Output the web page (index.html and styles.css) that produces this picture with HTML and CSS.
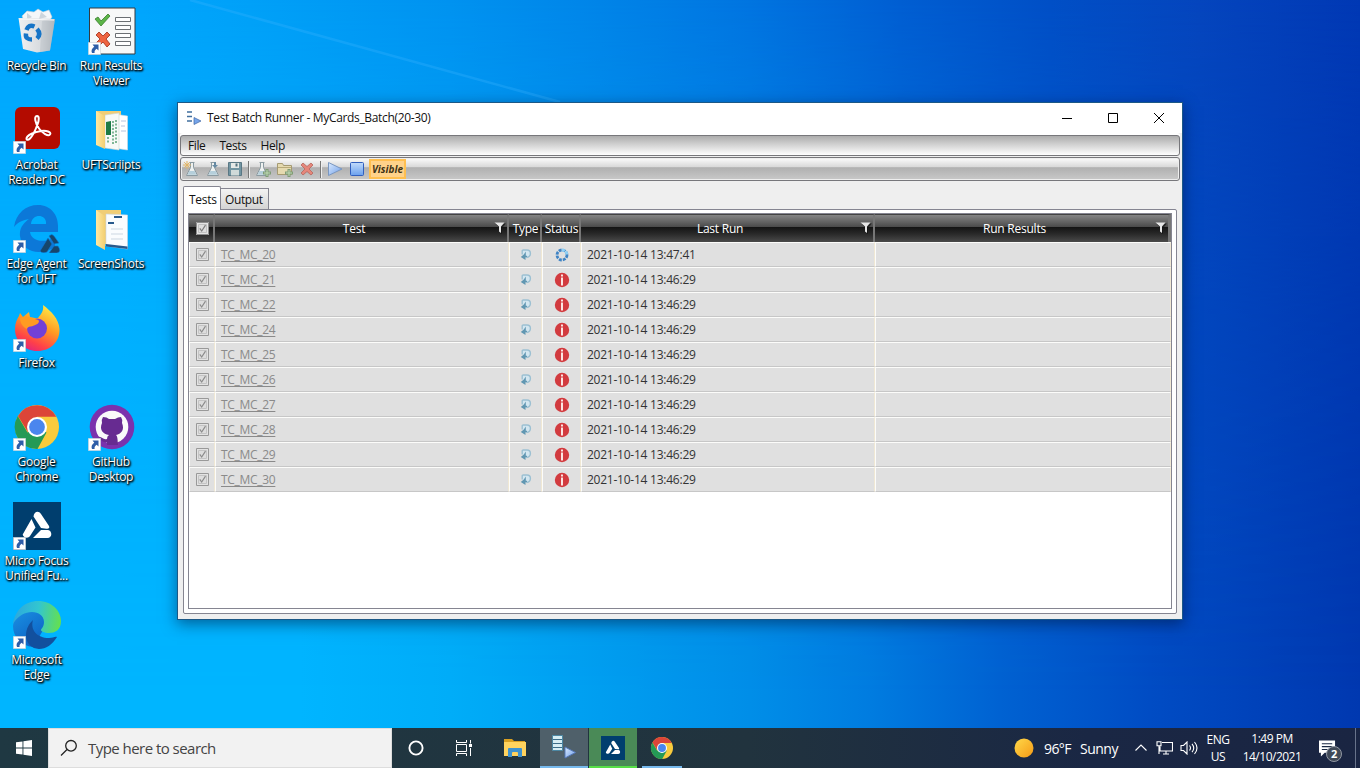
FILE: index.html
```
<!DOCTYPE html>
<html lang="en">
<head>
<meta charset="utf-8">
<title>Test Batch Runner</title>
<link rel="stylesheet" href="styles.css">
</head>
<body>
<svg class="defs" aria-hidden="true">
  <defs>
    <linearGradient id="gBlue" x1="0" y1="0" x2="1" y2="1"><stop offset="0" stop-color="#dcebff"/><stop offset="1" stop-color="#6d9de8"/></linearGradient>
    <linearGradient id="gStop" x1="0" y1="0" x2="0" y2="1"><stop offset="0" stop-color="#c3dcfb"/><stop offset="1" stop-color="#6aa0ee"/></linearGradient>
    <linearGradient id="gFox" x1="0.8" y1="0" x2="0.3" y2="1"><stop offset="0" stop-color="#fff14a"/><stop offset="0.45" stop-color="#ff9a22"/><stop offset="0.8" stop-color="#ff4148"/><stop offset="1" stop-color="#e3257c"/></linearGradient>
    <linearGradient id="gEdgeTop" x1="0" y1="0.5" x2="1" y2="0.6"><stop offset="0" stop-color="#2da8de"/><stop offset="0.5" stop-color="#32c6d0"/><stop offset="1" stop-color="#66e04d"/></linearGradient>
    <linearGradient id="gEdgeMid" x1="0" y1="0" x2="0.6" y2="1"><stop offset="0" stop-color="#1a91e3"/><stop offset="1" stop-color="#0d62c4"/></linearGradient>
    <linearGradient id="gBin" x1="0" y1="0" x2="1" y2="0"><stop offset="0" stop-color="#f0f1f2"/><stop offset="0.65" stop-color="#d5d9dd"/><stop offset="1" stop-color="#a9afb5"/></linearGradient>
    <linearGradient id="gSun" x1="0" y1="0" x2="1" y2="1"><stop offset="0" stop-color="#ffd94a"/><stop offset="1" stop-color="#f59a16"/></linearGradient>
    <linearGradient id="gFolder" x1="0" y1="0" x2="1" y2="0"><stop offset="0" stop-color="#ffe9a2"/><stop offset="1" stop-color="#f3cf72"/></linearGradient>
    <symbol id="shortcut" viewBox="0 0 13 13"><path fill="#fff" stroke="#b9c4cf" stroke-width=".6" d="M.3.3h12.4v12.4H.3z"/><path fill="#2d5da8" d="M4.5 2.5h6v6L8.600 6.800C6.800 8 6.300 9.300 6.600 11H4C2.800 8.500 4 6.200 6.300 4.700z"/></symbol>
    <symbol id="chrome" viewBox="0 0 48 48"><circle cx="24" cy="24" r="22" fill="#f9cb3d"/><path fill="#dc4538" d="M5 13A22 22 0 0 1 43.300 13.800H24L14.800 29z"/><path fill="#249a56" d="M4.800 13A22 22 0 0 0 24.500 46L33.500 29.500 24 24 14.500 29.500z"/><circle cx="24" cy="24" r="10" fill="#fff"/><circle cx="24" cy="24" r="7.900" fill="#4a86ee"/></symbol>
    <symbol id="tri" viewBox="0 0 48 48"><path fill="#fff" d="M20.500 14.500c.5-5 5-6.500 7.500-2.500l8 12c1 2-.5 3-2.500 2.700L28 26zM18.500 17 22.500 25.500l-5.500 8.500c-2 3-7 1.500-7.300-1.500zM28 28h7c4.500.8 4.500 8-.5 8H20z"/></symbol>
    <symbol id="filter" viewBox="0 0 12 12"><path fill="#111" opacity=".7" d="M1 1.500h11L8 6v6L6 11V6z"/><path fill="#e6e6e6" d="M.5.500h10L7 4.500V11L5 9.500v-5z"/></symbol>
    <symbol id="check" viewBox="0 0 13 13"><path class="ck-box" d="M.5.500h12v12H.5z"/><path class="ck-in" d="M2.500 2.500h8v8h-8z"/><path class="ck-tick" d="M3.800 6.300 5.700 9l3.800-5.800"/></symbol>
    <symbol id="type" viewBox="0 0 12 12"><path fill="#d3e6f0" stroke="#9cc0d2" stroke-width="1.400" d="M2.200 5.500V2q0-1 1-1H7q3.400 0 3.400 3.500T6.500 8.500"/><path fill="#6197b2" d="M5.800 2.500v4.300H7v1.400H5.500V11L.8 8l3-2.500z"/></symbol>
    <symbol id="info" viewBox="0 0 16 16"><circle cx="8" cy="8" r="7.200" fill="#d23b3f"/><path fill="#fbe6e4" d="M7 2.500h2v2H7zM7 5.500h2v8H7z"/></symbol>
    <symbol id="flask" viewBox="0 0 16 16"><path fill="#eef1f0" stroke="#8a9aa1" stroke-width="1" d="M6.500 1.500h5M7.500 1.500v5L3.500 14.500h11L10.500 6.500v-5"/><path fill="#b5cfdb" d="M6.300 10h5.300l1.800 3.700H4.600z"/></symbol>
  </defs>
</svg>
<div class="screen">
  <svg class="wallpaper" viewBox="0 0 1360 728"><path d="M190 0 560 102" stroke="#3db4ff" stroke-width="2.500" opacity=".3"/></svg>
  <main class="desktop">
    <div class="shortcut r1 c1"><svg class="glyph" viewBox="0 0 48 48"><path fill="#f4f7f9" stroke="#c5cdd4" stroke-width=".6" d="M9 9 14 4l7 1 4-3 5 3 6-2 3 7-4 6H12z"/><path fill="#cdd5dc" d="M14 6l5 4-5 3zM28 5l6 5-8 2z"/><path fill="url(#gBin)" d="M5.500 11 42 12 37 43.500 24 45.500 10 42z"/><path fill="#b9bfc5" opacity=".5" d="M29 14 42 12 37 43.500 27 45z"/><path d="m7 12 34 1" stroke="#fafafa"/><g fill="none" stroke="#1674c7" stroke-width="4.500"><path d="M13.500 23q2-6 8-3.500"/><path d="M24 22q4.500 5 0 9.500"/><path d="M19 32.500q-7 0-6-6"/></g></svg><span class="name">Recycle Bin</span></div>
    <div class="shortcut r1 c2"><svg class="glyph" viewBox="0 0 48 48"><path fill="#f7f8f8" stroke="#343a40" d="M1.500 1h45.500v46H1.500z"/><path fill="#5cb548" stroke="#397d2c" stroke-width=".8" d="m7 12 3-2 3 4 7-7 2 2-9 10z"/><path fill="#ee6440" stroke="#9e2b16" stroke-width=".8" d="m8 28 3-3 4 4 4-4 3 3-4 4 4 5-3 3-4-5-4 4-3-3 4-4z"/><path fill="#fff" stroke="#6b6f73" d="M27.500 10.500h15v4h-15zM27.500 18.500h15v4h-15zM27.500 26.500h15v4h-15zM27.500 34.500h15v4h-15z"/></svg><svg class="arrow"><use href="#shortcut"/></svg><span class="name">Run Results<br>Viewer</span></div>
    <div class="shortcut r2 c1"><svg class="glyph" viewBox="0 0 48 48"><rect x="2" y="1" width="45" height="42" rx="6" fill="#b30b00"/><path fill="none" stroke="#fff" stroke-width="2" stroke-linejoin="round" d="M24 10c-3.500 0-1.500 8 2 12.500S35 31 37 28.500s-4-4.500-9-3.500-11 2.500-13.500 5.500 0 4.500 2.500 2 6-10 7.500-14S26.500 10 24 10z"/></svg><svg class="arrow"><use href="#shortcut"/></svg><span class="name">Acrobat<br>Reader DC</span></div>
    <div class="shortcut r2 c2"><svg class="glyph" viewBox="0 0 48 48"><path fill="#f0cd76" d="M8 5h25v34H8z"/><path fill="#fff" stroke="#d5dade" stroke-width=".6" d="M26 8 39.500 10v34L26 42z"/><path stroke="#b6c4df" d="M33 15h5M33 20h4M33 25h5"/><path fill="#f7f9f7" stroke="#ccd4cc" stroke-width=".6" d="M17 9 31 7v37L17 42z"/><path fill="#1d7a45" d="M18 16l5-1v14h-5z"/><path stroke="#5aa178" stroke-width="1.500" stroke-dasharray="2 1.500" d="M25 15v23M28 14v24M20 31v7"/><path fill="url(#gFolder)" d="m8 5 9 5v33l-9-4z"/></svg><span class="name">UFTScriipts</span></div>
    <div class="shortcut r3 c1"><svg class="glyph" viewBox="0 0 48 48"><path fill="#0c78d8" d="M1 22C3 8 13 0 25 0c13 0 20 10 20 21v6H17c1 9 14 12 25 5v10c-14 9-33 6-35-11-1-9 5-14 9-17 C10 15 5 17 1 22zm17-3h15c1-10-14-11-15 0z"/><path fill="#17466c" stroke="#0c78d8" stroke-width=".6" d="M36 31q3-3 5 0l5 7-5 1zM35 33l4 6-5 8q-5 2-7-1zM41 41h4q4 6-1 7h-8z"/></svg><svg class="arrow"><use href="#shortcut"/></svg><span class="name">Edge Agent<br>for UFT</span></div>
    <div class="shortcut r3 c2"><svg class="glyph" viewBox="0 0 48 48"><path fill="#f0cd76" d="M8 5h25v34H8z"/><path fill="#fafcfe" stroke="#cbd5df" stroke-width=".6" d="M18 9 39.500 10v34L18 41z"/><path fill="#28598c" d="m18 39 21.500 2.500V44L18 41.500zM26 11h8v2h-8zM20 17h6v2h-6z"/><path stroke="#ccd7e2" d="M23 24h12M23 29h12M23 34h12"/><path fill="url(#gFolder)" d="m8 5 9 6v34l-9-5z"/></svg><span class="name">ScreenShots</span></div>
    <div class="shortcut r4 c1"><svg class="glyph" viewBox="0 0 48 48"><path fill="url(#gFox)" d="M30 1c8 6 16 14 16.500 24C47 38 37 47 24.500 47 11 47 2 37 2 25c0-6 2-10 4-13l1-3 3 4 6-5 1 5c4 1 6 1 8 1 3-4 6-7 5-13z"/><circle cx="24" cy="24.500" r="10" fill="#7240d6"/><path fill="#ff9b22" d="M7 14q6-3 11 0c3 1 7 1 8 3 0 3-4 4-6 5-3 1-5 0-6 3-4-2-7-6-7-11z"/></svg><svg class="arrow"><use href="#shortcut"/></svg><span class="name">Firefox</span></div>
    <div class="shortcut r5 c1"><svg class="glyph"><use href="#chrome"/></svg><svg class="arrow"><use href="#shortcut"/></svg><span class="name">Google<br>Chrome</span></div>
    <div class="shortcut r5 c2"><svg class="glyph" viewBox="0 0 48 48"><circle cx="24" cy="24" r="22.300" fill="#7b32ad"/><circle cx="24" cy="24" r="16.300" fill="#fafafa"/><path fill="#672b91" d="M15 14q4 0 6 2h6q3-2 6-2 2 3 1 6c3 7-1 11-6 12 2 2 1.500 6 2 10h-11v-3c-6 1-6-4-9-5 4-1 5 3.500 9 2q0-3 2-4c-6-1-10-5-7-12q-1-3 1-6z"/></svg><svg class="arrow"><use href="#shortcut"/></svg><span class="name">GitHub<br>Desktop</span></div>
    <div class="shortcut r6 c1"><svg class="glyph mf"><use href="#tri"/></svg><svg class="arrow"><use href="#shortcut"/></svg><span class="name">Micro Focus<br>Unified Fu...</span></div>
    <div class="shortcut r7 c1"><svg class="glyph" viewBox="0 0 48 48"><path fill="url(#gEdgeMid)" d="M0 25C1 14 10 8 20 10c10 2 13 9 12 16L20 46C8 45 0 36 0 25z"/><path fill="url(#gEdgeTop)" d="M0 23C2 9 12 0 25 0c14 0 23 10 23 20 0 9-6 12-12 12-5 0-8-2-8-3s3-3 3-8C31 9 10 6 0 23z"/><path fill="#12509e" d="M20 19c-3 10 4 18 16 18 4 0 6-2 8-1-5 8-11 12-18 12C11 47 9 29 20 19z"/></svg><svg class="arrow"><use href="#shortcut"/></svg><span class="name">Microsoft<br>Edge</span></div>
  </main>

  <section class="window">
    <header class="titlebar">
      <svg class="appicon" viewBox="0 0 16 16"><path stroke="#406f9f" stroke-width="1.500" d="M1 2h5M1 6.500h5M1 11h5"/><path fill="#76a5ea" stroke="#3e65a5" stroke-width=".7" d="M8 7.500 15 11l-7 3.500z"/></svg>
      <h1>Test Batch Runner - MyCards_Batch(20-30)</h1>
      <div class="controls">
        <svg viewBox="0 0 12 12"><path d="M1 6.500h10"/></svg>
        <svg viewBox="0 0 12 12"><path d="M1.500 1.500h9v9h-9z"/></svg>
        <svg viewBox="0 0 12 12"><path d="m1 1 10 10M11 1 1 11"/></svg>
      </div>
    </header>
    <nav class="menubar"><span>File</span><span>Tests</span><span>Help</span></nav>
    <div class="toolbar">
      <svg viewBox="0 0 16 16"><use href="#flask"/><path stroke="#e2b566" stroke-width="1" d="M4 0v8M0 4h8M1.200 1.200l5.600 5.600M6.800 1.200 1.200 6.800"/></svg>
      <svg viewBox="0 0 16 16"><use href="#flask" x="-1"/><path fill="#668aa3" d="M9 1h2v3h2l-3 3-3-3h2z"/></svg>
      <svg viewBox="0 0 16 16"><path fill="#7295a2" stroke="#597784" d="M1.500 1.500h13v13h-13z"/><path fill="#e6e9e7" d="M4 2h8v5H4z"/><path fill="#d0dad9" d="M4 9h8v5.500H4z"/><path fill="#55727f" d="M8.500 2.500h2v3h-2z"/></svg>
      <i class="sep"></i>
      <svg viewBox="0 0 16 16"><use href="#flask" x="-2"/><path stroke="#7f9c76" stroke-width="3" d="M12 8v8M8 12h8"/><path stroke="#c0dab5" stroke-width="1" d="M12 9v6M9 12h6"/></svg>
      <svg viewBox="0 0 16 16"><path fill="#e5dab0" stroke="#a59a72" d="M.5 2.500h5l1 2h8v9H.5z"/><path stroke="#b8aa79" d="M1 6.500h13"/><path stroke="#7f9c76" stroke-width="3" d="M12 8v8M8 12h8"/><path stroke="#c0dab5" d="M12 9v6M9 12h6"/></svg>
      <svg viewBox="0 0 16 16"><path fill="#e5867a" stroke="#b5665d" stroke-width=".8" d="m2 4 2-2 4 3.500L12 2l2 2-4 4 4 4-2 2-4-3.500L4 14l-2-2 4-4z"/></svg>
      <i class="sep"></i>
      <svg viewBox="0 0 16 16"><path fill="url(#gBlue)" stroke="#7a97c0" d="m1.500 1.500 13.500 6.500-13.500 6.500z"/></svg>
      <svg viewBox="0 0 16 16"><rect x="1.500" y="1.500" width="13" height="13" rx="1" fill="url(#gStop)" stroke="#315fbe"/></svg>
      <b class="visible">Visible</b>
    </div>
    <div class="tabs"><span class="tab active">Tests</span><span class="tab">Output</span></div>
    <div class="panel"><div class="gridbox">
      <div class="row head"><span class="cell ck"><svg><use href="#check"/></svg></span><span class="cell title">Test<svg><use href="#filter"/></svg></span><span class="cell">Type</span><span class="cell">Status</span><span class="cell title">Last Run<svg><use href="#filter"/></svg></span><span class="cell title">Run Results<svg><use href="#filter"/></svg></span></div>
      <div class="row"><span class="cell ck"><svg><use href="#check"/></svg></span><span class="cell link"><a>TC_MC_20</a></span><span class="cell ty"><svg><use href="#type"/></svg></span><span class="cell st"><svg viewBox="0 0 16 16"><circle cx="8" cy="8" r="5" fill="none" stroke="#3e83c4" stroke-width="2.800" stroke-dasharray="2.900 1.027"/><path fill="none" stroke="#8ed0f5" stroke-width="2.800" stroke-dasharray="2.900 1.027" d="M8 3a5 5 0 0 1 5 5"/></svg></span><span class="cell">2021-10-14 13:47:41</span><span class="cell"></span></div>
      <div class="row"><span class="cell ck"><svg><use href="#check"/></svg></span><span class="cell link"><a>TC_MC_21</a></span><span class="cell ty"><svg><use href="#type"/></svg></span><span class="cell st"><svg><use href="#info"/></svg></span><span class="cell">2021-10-14 13:46:29</span><span class="cell"></span></div>
      <div class="row"><span class="cell ck"><svg><use href="#check"/></svg></span><span class="cell link"><a>TC_MC_22</a></span><span class="cell ty"><svg><use href="#type"/></svg></span><span class="cell st"><svg><use href="#info"/></svg></span><span class="cell">2021-10-14 13:46:29</span><span class="cell"></span></div>
      <div class="row"><span class="cell ck"><svg><use href="#check"/></svg></span><span class="cell link"><a>TC_MC_24</a></span><span class="cell ty"><svg><use href="#type"/></svg></span><span class="cell st"><svg><use href="#info"/></svg></span><span class="cell">2021-10-14 13:46:29</span><span class="cell"></span></div>
      <div class="row"><span class="cell ck"><svg><use href="#check"/></svg></span><span class="cell link"><a>TC_MC_25</a></span><span class="cell ty"><svg><use href="#type"/></svg></span><span class="cell st"><svg><use href="#info"/></svg></span><span class="cell">2021-10-14 13:46:29</span><span class="cell"></span></div>
      <div class="row"><span class="cell ck"><svg><use href="#check"/></svg></span><span class="cell link"><a>TC_MC_26</a></span><span class="cell ty"><svg><use href="#type"/></svg></span><span class="cell st"><svg><use href="#info"/></svg></span><span class="cell">2021-10-14 13:46:29</span><span class="cell"></span></div>
      <div class="row"><span class="cell ck"><svg><use href="#check"/></svg></span><span class="cell link"><a>TC_MC_27</a></span><span class="cell ty"><svg><use href="#type"/></svg></span><span class="cell st"><svg><use href="#info"/></svg></span><span class="cell">2021-10-14 13:46:29</span><span class="cell"></span></div>
      <div class="row"><span class="cell ck"><svg><use href="#check"/></svg></span><span class="cell link"><a>TC_MC_28</a></span><span class="cell ty"><svg><use href="#type"/></svg></span><span class="cell st"><svg><use href="#info"/></svg></span><span class="cell">2021-10-14 13:46:29</span><span class="cell"></span></div>
      <div class="row"><span class="cell ck"><svg><use href="#check"/></svg></span><span class="cell link"><a>TC_MC_29</a></span><span class="cell ty"><svg><use href="#type"/></svg></span><span class="cell st"><svg><use href="#info"/></svg></span><span class="cell">2021-10-14 13:46:29</span><span class="cell"></span></div>
      <div class="row"><span class="cell ck"><svg><use href="#check"/></svg></span><span class="cell link"><a>TC_MC_30</a></span><span class="cell ty"><svg><use href="#type"/></svg></span><span class="cell st"><svg><use href="#info"/></svg></span><span class="cell">2021-10-14 13:46:29</span><span class="cell"></span></div>
    </div></div>
  </section>

  <footer class="taskbar">
    <div class="start"><svg viewBox="0 0 16 16"><path fill="#fff" d="M0 2.300 6.500 1.400V7.500H0zM7.400 1.200 16 0v7.500H7.400zM0 8.400h6.500v6.200L0 13.700zM7.400 8.400H16V16l-8.600-1.200z"/></svg></div>
    <div class="search"><svg viewBox="0 0 18 18"><path fill="none" stroke="#222" stroke-width="1.300" d="M1 16.500 7 10.500"/><circle cx="11" cy="6.800" r="5.300" fill="none" stroke="#222" stroke-width="1.300"/></svg><span>Type here to search</span></div>
    <div class="task"><svg class="i16" viewBox="0 0 16 16"><circle cx="8" cy="8" r="6.600" fill="none" stroke="#fff" stroke-width="1.900"/></svg></div>
    <div class="task"><svg class="i16" viewBox="0 0 16 16"><path fill="none" stroke="#fff" stroke-width="1" d="M.5 0v2.500h10V0M.5 4.500h10v7H.5zM.5 16v-2.500h10V16M14.500 0v3.500M14.500 8v8"/><path fill="#fff" d="M13 4h3v3h-3z"/></svg></div>
    <div class="task ex"><svg class="i22" viewBox="0 0 22 20"><path fill="#d9a022" d="M0 1h8l2 2h11v4H0z"/><path fill="#ffd35e" d="M0 4h22v14H0z"/><path fill="#3e92cf" d="M4 19v-8q0-1 1-1h12q1 0 1 1v8h-4v-4q0-1-1-1H9q-1 0-1 1v4z"/></svg></div>
    <div class="task batch"><svg class="i24" viewBox="0 0 24 24"><path fill="#d6edf4" stroke="#4c87a3" d="M.5.500h10v15H.5z"/><path stroke="#3c6c88" d="M1 4.500h9M1 8.500h9M1 12.500h9"/><path fill="url(#gBlue)" stroke="#5478b9" d="m13 12 10.500 5.500L13 23z"/></svg></div>
    <div class="task uft"><svg class="mf"><use href="#tri"/></svg></div>
    <div class="task chr"><svg class="i24"><use href="#chrome"/></svg></div>
    <div class="tray">
      <svg class="sun" viewBox="0 0 20 20"><circle cx="10" cy="10" r="9.500" fill="url(#gSun)"/></svg>
      <span class="temp">96°F</span><span class="wx">Sunny</span>
      <svg class="chev" viewBox="0 0 12 8"><path d="m.5 6.500 5.500-5.500 5.500 5.500"/></svg>
      <svg class="net" viewBox="0 0 17 14"><path d="M6 1.500h10.500v8.500H4V5.500M1 .8h4v4H1zM3 5v8M7 13h6M10 10v3"/></svg>
      <svg class="vol" viewBox="0 0 18 14"><path d="M1 4.500h2.500L7 1v12L3.500 9.500H1zM9.500 4.500q2 2.500 0 5M12 2.800q3.500 4.200 0 8.400M14.500 1q5 6 0 12"/></svg>
      <span class="lang">ENG<br>US</span><span class="clock">1:49 PM<br>14/10/2021</span>
      <div class="note"><svg viewBox="0 0 18 17"><path fill="#fff" d="M0 0h17v13H6l-4 4v-4H0z"/><path stroke="#1b2943" stroke-width="1.200" d="M3 3.500h11M3 6.500h11M3 9.500h6"/></svg><b>2</b></div>
      <i class="peek"></i>
    </div>
  </footer>
</div>
</body>
</html>
```
FILE: styles.css
```
* { box-sizing: border-box; }
body { margin: 0; font: 12px/15px "Open Sans", "Noto Sans", sans-serif; letter-spacing: -.24px; color: #111; }
svg { display: block; flex: none; }
.defs { position: absolute; width: 0; height: 0; }
.screen { position: relative; width: 1360px; height: 768px; overflow: hidden; display: flex; flex-direction: column;
  background: linear-gradient(90deg, #00b5ff 300px, #00adf8 450px, #009ef0 600px, #008ee8 750px, #007ce0 870px, #0062d2 1000px, #004cc4 1150px, #0038b0 1360px); }
.screen::before { content: ""; position: absolute; inset: 0;
  background: linear-gradient(90deg, #00a6fe 120px, #00a0f8 250px, #0092f0 450px, #0084e8 600px, #0074e0 750px, #005ed2 900px, #004fc6 1050px, #0445bd 1200px, #0038b4 1360px);
  mask-image: linear-gradient(#000, rgba(0,0,0,.35) 40%, transparent 90%); }
.wallpaper { position: absolute; left: 0; top: 0; width: 1360px; height: 728px; }

.desktop { flex: 1; display: grid; grid-template-columns: 74px 75px; grid-template-rows: repeat(7, 99px); }
.shortcut { position: relative; display: flex; flex-direction: column; align-items: center; padding-top: 7px; color: #fff; text-align: center; }
.glyph { width: 48px; height: 48px; }
.arrow { position: absolute; left: 13px; top: 42px; width: 13px; height: 13px; }
.c2 .arrow { left: 14px; }
.name { margin-top: 3px; padding-right: 1px; white-space: nowrap; letter-spacing: -.28px; text-shadow: 1px 1px 2px #000, 1px 1px 2px #000, 0 1px 2px rgba(0,0,0,.8); }
.mf { background: #003e6e; }
.r1 { grid-row: 1; } .r2 { grid-row: 2; } .r3 { grid-row: 3; } .r4 { grid-row: 4; } .r5 { grid-row: 5; } .r6 { grid-row: 6; } .r7 { grid-row: 7; }
.c1 { grid-column: 1; } .c2 { grid-column: 2; }

.window { position: absolute; left: 177px; top: 102px; width: 1006px; height: 518px; display: flex; flex-direction: column; background: #efefef; border: 1px solid #1c5886; box-shadow: 0 4px 14px rgba(0,15,50,.5); }
.titlebar { height: 30px; display: flex; align-items: center; background: #fff; padding-left: 8px; flex: none; }
.appicon { width: 16px; height: 16px; }
h1 { flex: 1; margin: 0 0 2px 5px; font-size: 12px; font-weight: 400; letter-spacing: -.34px; }
.controls { display: flex; gap: 34px; padding-right: 17px; margin-bottom: 1px; }
.controls svg { width: 12px; height: 12px; fill: none; stroke: #000; }
.menubar { height: 21px; margin: 2px 2px 0; padding-left: 7px; display: flex; gap: 14px; align-items: center; border: 1px solid #77777b; border-radius: 3px; background: linear-gradient(#acacac, #fff); box-shadow: 0 -2px #fff; letter-spacing: -.4px; flex: none; }
.toolbar { height: 24px; margin: 1px 2px 0; display: flex; align-items: center; padding-left: 2px; gap: 6px; border: 1px solid #77777b; border-radius: 3px; background: linear-gradient(#fcfcfc, #d9d9d9 40%, #b0b0b0 44%, #c9c9c9); box-shadow: inset 0 0 0 1px #eee; flex: none; }
.toolbar svg { width: 16px; height: 16px; }
.sep { width: 2px; height: 17px; margin: 0 -1px; border-left: 1px solid #777; border-right: 1px solid #eee; }
.visible { width: 37px; height: 20px; margin-left: -2px; border: 2px solid #ffbf50; background: #ffd28a; color: #3f3216; font: italic bold 10px/16px "Open Sans", sans-serif; letter-spacing: 0; text-align: center; }
.tabs { display: flex; height: 28px; padding: 5px 5px 0; align-items: flex-end; position: relative; letter-spacing: -.4px; flex: none; }
.tab { height: 21px; padding: 3px 4px; border: 1px solid #858591; border-bottom: 0; background: linear-gradient(#f3f3f3, #d4d4d4); width: 49px; margin-left: -1px; line-height: 16px; white-space: nowrap; }
.tab.active { width: 38px; height: 24px; margin: 0 0 -1px; padding: 5px 5px; background: #fff; border-radius: 2px 2px 0 0; letter-spacing: -.3px; }
.panel { flex: 1; margin: 0 5px 5px; border: 1px solid #858591; background: #fff; padding: 3px 4px 4px; border-radius: 0 2px 2px; min-height: 0; }
.gridbox { height: 100%; border: 1px solid #858591; overflow: hidden; }
.row { display: grid; grid-template-columns: 26px 294px 33px 39px 294px 296px; height: 25px; }
.cell { display: flex; align-items: center; padding-left: 5px; background: #e0e0e0; border: 1px solid #fcfcfa; border-right-color: #f0e8d4; border-bottom-color: #c7c7c7; color: #333; white-space: nowrap; }
.link { color: #8a8a8a; }
.link a { text-decoration: underline; text-underline-offset: 2px; letter-spacing: -.3px; }
.ck { padding: 0; justify-content: center; }
.ck svg { width: 13px; height: 13px; fill: none; opacity: .85; }
.ck-box { fill: #e4e4e4; stroke: #8d8d8d; } .ck-in { fill: #ddd; stroke: #c0c0c0; } .ck-tick { fill: none; stroke: #7d7d7d; stroke-width: 1.2; }
.ty, .st { padding: 0; justify-content: center; }
.ty svg { width: 12px; height: 12px; }
.st svg { width: 16px; height: 16px; }
.head { height: 28px; }
.head .cell { position: relative; padding: 0 0 1px 2px; justify-content: center; border: 0; border-right: 2px solid #777; border-top: 1px solid #444; background: linear-gradient(#858585, #4c4c4c 43%, #151515 46%, #292929 70%, #4a4a4a); color: #fff; }
.head .cell:last-child { border-right-width: 3px; }
.head .title { padding-right: 16px; }
.head .title svg { position: absolute; right: 1px; top: 7px; width: 12px; height: 12px; }
.head .ck svg { background: #eee; opacity: 1; }

.taskbar { height: 40px; display: flex; background: linear-gradient(90deg, #1f3842, #21333e 55%, #1a2744 80%, #1a2542); position: relative; }
.start { width: 48px; display: grid; place-items: center; }
.start svg { width: 16px; height: 16px; }
.search { width: 344px; background: #f2f2f2; border: 1px solid #ddd; display: flex; align-items: center; padding-left: 11px; gap: 10px; font-size: 15px; letter-spacing: -.54px; color: #444; }
.search svg { width: 18px; height: 18px; }
.task { width: 48px; display: grid; place-items: center; }
.ex { width: 52px; padding-left: 2px; }
.batch { background: #4f606a; border-bottom: 2px solid #76b9ed; }
.uft { background: #4a8a57; border-bottom: 2px solid #56df47; margin-left: 1px; }
.uft svg { margin-top: 2px; }
.chr { width: 40px; margin-left: 5px; padding-top: 1px; border-bottom: 2px solid #76b9ed; }
.i16 { width: 16px; height: 16px; } .i22 { width: 22px; height: 20px; } .i24, .uft svg { width: 24px; height: 24px; }
.tray { margin-left: auto; width: 346px; display: flex; align-items: center; color: #fff; }
.tray svg { fill: none; stroke: #fff; stroke-width: 1.1; }
.tray .sun { width: 20px; height: 20px; stroke: none; }
.temp { width: 36px; margin-left: 10px; font-size: 14px; letter-spacing: -.6px; }
.wx { width: 46px; font-size: 14px; letter-spacing: -.5px; }
.chev { width: 12px; height: 8px; margin-left: 9px; }
.net { width: 17px; height: 14px; margin-left: 9px; }
.vol { width: 18px; height: 14px; margin-left: 7px; }
.lang, .clock { line-height: 17px; text-align: center; }
.lang { width: 30px; margin-left: 5px; letter-spacing: -.5px; }
.clock { width: 62px; margin: -1px 0 0 8px; line-height: 18px; letter-spacing: -.5px; }
.note { position: relative; margin-left: 16px; width: 26px; height: 24px; padding-top: 4px; }
.note svg { width: 17px; height: 17px; stroke: none; }
.note b { position: absolute; left: 7px; top: 10px; width: 16px; height: 16px; border: 1px solid #9298a3; border-radius: 50%; background: #404957; font: bold 11px/14px "Open Sans", sans-serif; text-align: center; }
.peek { position: absolute; right: 4px; top: 0; width: 1px; height: 40px; background: #68738a; }
```
